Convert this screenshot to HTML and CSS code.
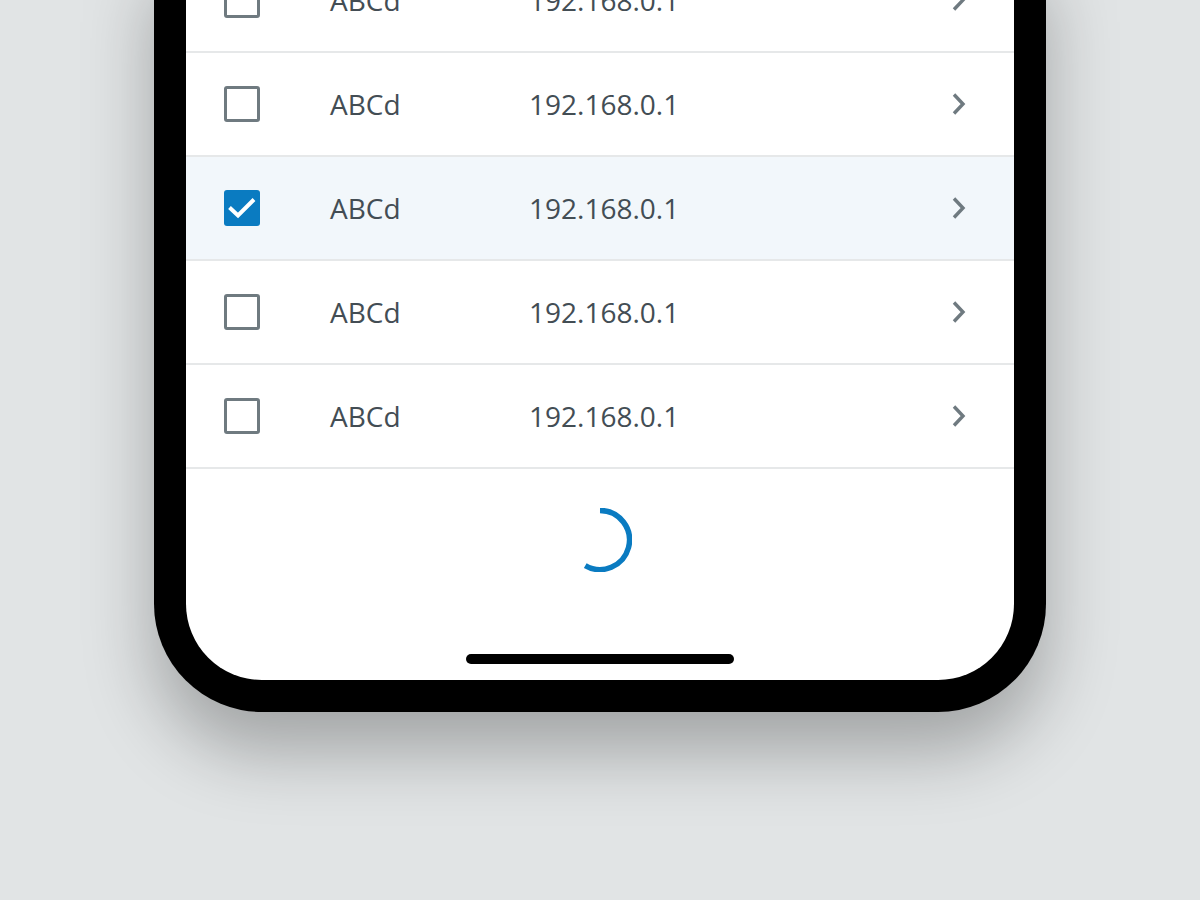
FILE: index.html
```html
<!DOCTYPE html>
<html>
<head>
<meta charset="utf-8">
<link rel="stylesheet" href="styles.css">
</head>
<body>
<div class="stage">
  <div class="phone">
    <div class="screen">
      <ul class="list">
        <li class="row">
          <span class="cb"></span><span class="name">ABCd</span><span class="ip">192.168.0.1</span>
          <svg class="chev" viewBox="0 0 16 24"><path d="M4 2.5 L13 12 L4 21.5" fill="none" stroke="#6f7a80" stroke-width="3.4"/></svg>
        </li>
        <li class="row">
          <span class="cb"></span><span class="name">ABCd</span><span class="ip">192.168.0.1</span>
          <svg class="chev" viewBox="0 0 16 24"><path d="M4 2.5 L13 12 L4 21.5" fill="none" stroke="#6f7a80" stroke-width="3.4"/></svg>
        </li>
        <li class="row selected">
          <span class="cb checked"><svg viewBox="0 0 36 36"><path d="M5.5 17.5 L14 25.5 L30 9.5" fill="none" stroke="#fff" stroke-width="4"/></svg></span><span class="name">ABCd</span><span class="ip">192.168.0.1</span>
          <svg class="chev" viewBox="0 0 16 24"><path d="M4 2.5 L13 12 L4 21.5" fill="none" stroke="#6f7a80" stroke-width="3.4"/></svg>
        </li>
        <li class="row">
          <span class="cb"></span><span class="name">ABCd</span><span class="ip">192.168.0.1</span>
          <svg class="chev" viewBox="0 0 16 24"><path d="M4 2.5 L13 12 L4 21.5" fill="none" stroke="#6f7a80" stroke-width="3.4"/></svg>
        </li>
        <li class="row">
          <span class="cb"></span><span class="name">ABCd</span><span class="ip">192.168.0.1</span>
          <svg class="chev" viewBox="0 0 16 24"><path d="M4 2.5 L13 12 L4 21.5" fill="none" stroke="#6f7a80" stroke-width="3.4"/></svg>
        </li>
      </ul>
      <div class="loader">
        <svg class="spinner" viewBox="0 0 64 64"><path d="M32 2.5 A29.5 29.5 0 1 1 17.25 57.55" fill="none" stroke="#0a7bc1" stroke-width="5.5"/></svg>
      </div>
      <div class="home"></div>
    </div>
  </div>
</div>
</body>
</html>
```
FILE: styles.css
```css
html, body {
  margin: 0;
  padding: 0;
  background: #e1e4e5;
  height: 100%;
  overflow: hidden;
}
.stage {
  display: flex;
  justify-content: center;
  margin-top: -51px;
}
.phone {
  width: 828px;
  padding: 0 32px 32px;
  background: #000;
  border-radius: 0 0 108px 108px;
  box-shadow: 0 40px 70px rgba(0, 0, 0, 0.28);
}
.screen {
  background: #fff;
  border-radius: 0 0 76px 76px;
  display: flex;
  flex-direction: column;
  overflow: hidden;
}
.list {
  list-style: none;
  margin: 0;
  padding: 0;
}
.row {
  box-sizing: border-box;
  height: 104px;
  border-bottom: 2px solid #e6e8e9;
  display: flex;
  align-items: center;
  padding: 0 48px 0 38px;
  font-family: "Open Sans", sans-serif;
  font-size: 28px;
  color: #434d54;
}
.row.selected {
  background: #f2f7fb;
}
.cb {
  box-sizing: border-box;
  width: 36px;
  height: 36px;
  border: 3px solid #6f7a80;
  border-radius: 3px;
  flex: none;
  display: flex;
}
.cb.checked {
  background: #0a7bc1;
  border: none;
}
.cb svg {
  width: 36px;
  height: 36px;
}
.name {
  margin-left: 70px;
  width: 199px;
}
.ip {
  flex: 1;
}
.chev {
  width: 16px;
  height: 24px;
  flex: none;
}
.loader {
  display: flex;
  justify-content: center;
  padding-top: 39px;
}
.spinner {
  width: 64px;
  height: 64px;
}
.home {
  align-self: center;
  width: 268px;
  height: 10px;
  border-radius: 5px;
  background: #000;
  margin: 82px 0 16px;
}
```
